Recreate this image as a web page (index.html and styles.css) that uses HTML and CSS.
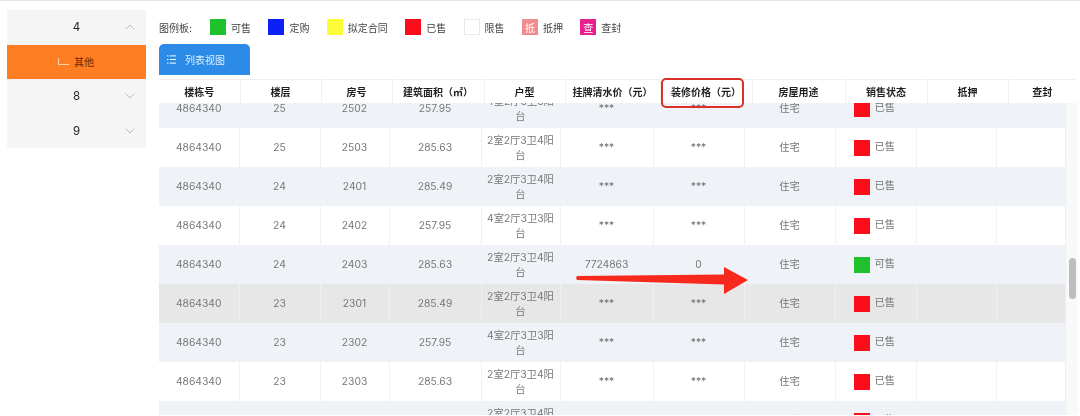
FILE: index.html
```html
<!DOCTYPE html>
<html lang="zh-CN">
<head>
<meta charset="utf-8">
<title>列表视图</title>
<link rel="stylesheet" href="styles.css">
</head>
<body>
<div class="page">
  <aside class="side">
    <div class="side-row"><span class="side-label">4</span><svg class="chev" viewBox="0 0 10 6"><path d="M.7 5.5 5 1l4.3 4.5"/></svg></div>
    <div class="side-row side-row-active"><span class="corner"></span><span>其他</span></div>
    <div class="side-row"><span class="side-label">8</span><svg class="chev" viewBox="0 0 10 6"><path d="M.7.5 5 5 9.3.5"/></svg></div>
    <div class="side-row"><span class="side-label">9</span><svg class="chev" viewBox="0 0 10 6"><path d="M.7.5 5 5 9.3.5"/></svg></div>
  </aside>
  <main class="main">
    <div class="legend">
      <span class="legend-title">图例板:</span>
      <span class="legend-item"><i class="sw sw-green"></i>可售</span>
      <span class="legend-item"><i class="sw sw-blue"></i>定购</span>
      <span class="legend-item"><i class="sw sw-yellow"></i>拟定合同</span>
      <span class="legend-item"><i class="sw sw-red"></i>已售</span>
      <span class="legend-item"><i class="sw sw-white"></i>限售</span>
      <span class="legend-item"><i class="sw sw-pink">抵</i>抵押</span>
      <span class="legend-item"><i class="sw sw-magenta">查</i>查封</span>
    </div>
    <div class="tabs">
      <div class="tab">
        <svg class="tab-icon" viewBox="0 0 10 10"><path d="M0 1h1.6M3 1h7M0 5h1.6M3 5h7M0 9h1.6M3 9h7"/></svg>
        <span>列表视图</span>
      </div>
    </div>
    <div class="grid">
      <table class="thead-table">
        <colgroup><col class="h1"><col class="h2"><col class="h3"><col class="h4"><col class="h5"><col class="h6"><col class="h7"><col class="h8"><col class="h9"><col class="h10"><col class="h11"></colgroup>
        <thead>
          <tr><th>楼栋号</th><th>楼层</th><th>房号</th><th>建筑面积（㎡）</th><th>户型</th><th>挂牌清水价（元）</th><th>装修价格（元）</th><th>房屋用途</th><th>销售状态</th><th>抵押</th><th>查封</th></tr>
        </thead>
      </table>
      <div class="body-wrap">
        <div class="body-clip">
          <table class="tbody-table">
            <colgroup><col class="b1"><col class="b2"><col class="b3"><col class="b4"><col class="b5"><col class="b6"><col class="b7"><col class="b8"><col class="b9"><col class="b10"><col class="b11"></colgroup>
            <tbody>
              <tr class="alt"><td>4864340</td><td>25</td><td>2502</td><td>257.95</td><td>4室2厅3卫3阳台</td><td>***</td><td>***</td><td>住宅</td><td class="st"><i class="sw sw-red"></i>已售</td><td></td><td></td></tr>
              <tr><td>4864340</td><td>25</td><td>2503</td><td>285.63</td><td>2室2厅3卫4阳台</td><td>***</td><td>***</td><td>住宅</td><td class="st"><i class="sw sw-red"></i>已售</td><td></td><td></td></tr>
              <tr class="alt"><td>4864340</td><td>24</td><td>2401</td><td>285.49</td><td>2室2厅3卫4阳台</td><td>***</td><td>***</td><td>住宅</td><td class="st"><i class="sw sw-red"></i>已售</td><td></td><td></td></tr>
              <tr><td>4864340</td><td>24</td><td>2402</td><td>257.95</td><td>4室2厅3卫3阳台</td><td>***</td><td>***</td><td>住宅</td><td class="st"><i class="sw sw-red"></i>已售</td><td></td><td></td></tr>
              <tr class="alt"><td>4864340</td><td>24</td><td>2403</td><td>285.63</td><td>2室2厅3卫4阳台</td><td>7724863</td><td>0</td><td>住宅</td><td class="st"><i class="sw sw-green"></i>可售</td><td></td><td></td></tr>
              <tr class="hover"><td>4864340</td><td>23</td><td>2301</td><td>285.49</td><td>2室2厅3卫4阳台</td><td>***</td><td>***</td><td>住宅</td><td class="st"><i class="sw sw-red"></i>已售</td><td></td><td></td></tr>
              <tr class="alt"><td>4864340</td><td>23</td><td>2302</td><td>257.95</td><td>4室2厅3卫3阳台</td><td>***</td><td>***</td><td>住宅</td><td class="st"><i class="sw sw-red"></i>已售</td><td></td><td></td></tr>
              <tr><td>4864340</td><td>23</td><td>2303</td><td>285.63</td><td>2室2厅3卫4阳台</td><td>***</td><td>***</td><td>住宅</td><td class="st"><i class="sw sw-red"></i>已售</td><td></td><td></td></tr>
              <tr class="alt"><td>4864340</td><td>22</td><td>2201</td><td>285.49</td><td>2室2厅3卫4阳台</td><td>***</td><td>***</td><td>住宅</td><td class="st"><i class="sw sw-red"></i>已售</td><td></td><td></td></tr>
            </tbody>
          </table>
        </div>
        <div class="scrollbar"><div class="thumb"></div></div>
      </div>
    </div>
  </main>
</div>
<div class="mark-box"></div>
<svg class="mark-arrow" viewBox="0 0 180 34"><path d="M2 11C1 12 1 14 2 15L149 19.500 149 29 173 15 149 2 149 9.500Z"/></svg>
</body>
</html>
```
FILE: styles.css
```css
* { box-sizing: border-box; }
html, body { margin: 0; height: 100%; overflow: hidden; background: #fff; }
body {
  font-family: Inter, "Noto Sans CJK SC", sans-serif;
  font-size: 10.3px;
  color: #666;
  border-top: 1px solid #e6e6e6;
  position: relative;
}
.page { display: flex; align-items: flex-start; gap: 13px; padding: 9px 0 0 7px; height: 415px; filter: blur(.3px); }

.side { width: 139px; flex: none; background: #f5f5f5; display: flex; flex-direction: column; }
.side-row { height: 34.500px; display: flex; align-items: center; justify-content: center; position: relative; color: #222; font-size: 11.500px; }
.side-row-active { background: #ff7d23; color: #6b2a00; font-size: 10px; gap: 5px; padding-right: 1px; }
.corner { width: 11px; height: 7px; border-left: 1px solid #ffd2b0; border-bottom: 1px solid #ffd2b0; }
.chev { position: absolute; right: 11px; top: 14px; width: 10px; height: 6px; fill: none; stroke: #b4b4b4; stroke-width: .9; }

.main { width: 921px; flex: none; display: flex; flex-direction: column; }
.legend { display: flex; align-items: center; height: 16px; margin-top: 9px; color: #444; font-size: 10px; }
.legend-title { width: 51px; }
.legend-item { display: flex; align-items: center; gap: 5px; margin-right: 17.400px; }
.sw { display: inline-flex; width: 16px; height: 16px; flex: none; align-items: center; justify-content: center; font-style: normal; font-size: 10px; color: #fff; }
.sw-green { background: #1fc12d; }
.sw-blue { background: #0a20f5; }
.sw-yellow { background: #fdfd37; }
.sw-red { background: #fc0d1b; }
.sw-white { background: #fff; border: 1px solid #e8e8e8; }
.sw-pink { background: #f28b8b; }
.sw-magenta { background: #e8208c; }

.tabs { margin-top: 9px; height: 31px; }
.tab { width: 91px; height: 31px; background: #2b8be6; color: #dfeeff; border-radius: 5px 5px 0 0; display: flex; align-items: center; gap: 9px; padding: 0 0 0 8px; font-size: 10px; }
.tab-icon { width: 9px; height: 9px; fill: none; stroke: #fff; stroke-width: 1.100; }

.grid { margin-top: 4px; display: flex; flex-direction: column; height: 336px; }
table { border-collapse: collapse; table-layout: fixed; }
.thead-table { width: 917px; height: 24px; background: #fff; border-top: 1px solid #f0f0f0; font-size: 10px; }
th { font-weight: 700; color: #1f1f1f; padding: 0; text-align: center; border-left: 1px solid #f2f2f2; white-space: nowrap; }
th:first-child { border-left: 0; }
.h1 { width: 81px; } .h2 { width: 81px; } .h3 { width: 71px; } .h4 { width: 92px; }
.h5 { width: 81px; } .h6 { width: 95px; } .h7 { width: 92px; } .h8 { width: 93px; }
.h9 { width: 82px; } .h10 { width: 81px; } .h11 { width: 68px; }

.body-wrap { display: flex; flex: 1; min-height: 0; }
.body-clip { width: 906px; flex: none; overflow: hidden; }
.tbody-table { width: 906px; margin-top: -14px; }
.b1 { width: 80px; } .b2 { width: 81px; } .b3 { width: 69px; } .b4 { width: 92px; }
.b5 { width: 79px; } .b6 { width: 93px; } .b7 { width: 91px; } .b8 { width: 91px; }
.b9 { width: 81px; } .b10 { width: 80px; } .b11 { width: 69px; }
tbody tr { height: 39px; background: #fff; }
td { padding: 0 3px; text-align: center; line-height: 15px; color: #777; border-left: 1px solid #f1f1f1; }
td:first-child { border-left: 0; }
tr.alt { background: #eff3f8; }
tr.alt td { border-left-color: #eff3f8; }
tr.hover { background: #e7e7e7; }
tr.hover td { border-left-color: #f0f0f0; }
td.st { text-align: left; padding-left: 18px; white-space: nowrap; }
td.st .sw { vertical-align: middle; margin-right: 5px; }

.scrollbar { width: 13px; flex: none; background: #f9f9f9; border-left: 1px solid #efefef; padding: 155px 2px 0 3px; }
.thumb { height: 41px; border-radius: 4px; background: #bdbdbd; }

.mark-box { position: absolute; left: 661px; top: 77px; width: 83px; height: 30px; border: 2px solid #d9302a; border-radius: 5px; }
.mark-arrow { position: absolute; left: 575px; top: 264px; width: 180px; height: 34px; fill: #f7291c; }
```
